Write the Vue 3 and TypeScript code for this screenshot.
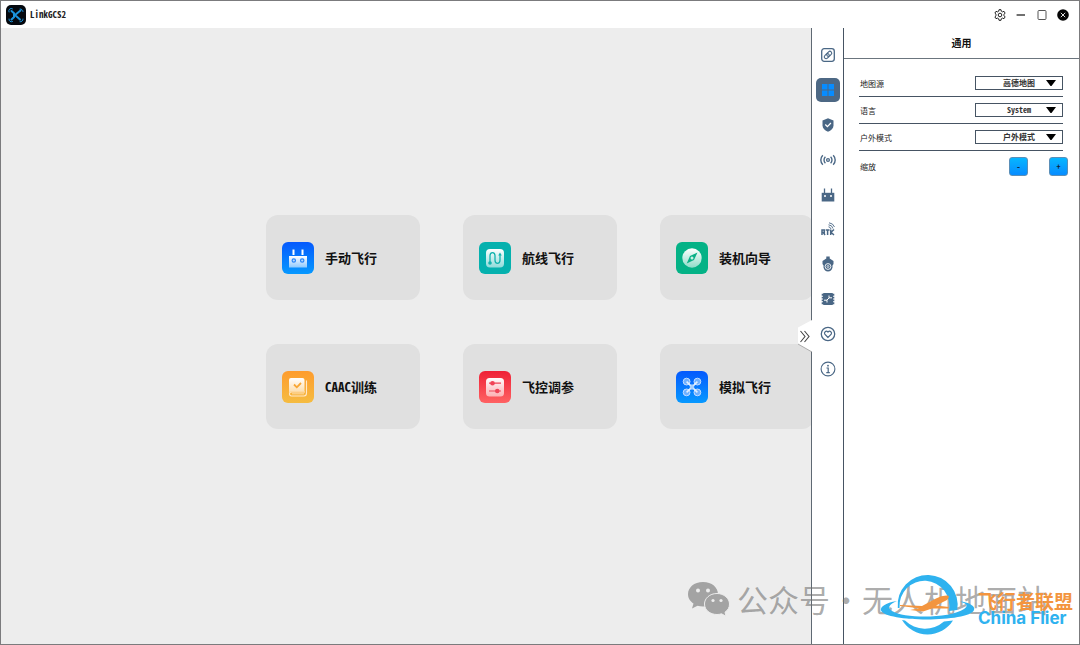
<script setup lang="ts">
import { ref } from 'vue'

interface Feature {
  id: string
  label: string
}
interface Setting {
  id: string
  label: string
  options: string[]
}

const features: Feature[] = [
  { id: 'manual', label: '手动飞行' },
  { id: 'route', label: '航线飞行' },
  { id: 'wizard', label: '装机向导' },
  { id: 'caac', label: 'CAAC训练' },
  { id: 'tuning', label: '飞控调参' },
  { id: 'sim', label: '模拟飞行' },
]

const tabs = ['link', 'general', 'safety', 'signal', 'remote', 'rtk', 'camera', 'power', 'health', 'info']
const activeTab = ref('general')

const settings: Setting[] = [
  { id: 'map-source', label: '地图源', options: ['高德地图'] },
  { id: 'language', label: '语言', options: ['System'] },
  { id: 'outdoor', label: '户外模式', options: ['户外模式'] },
]
const values = ref<Record<string, string>>({
  'map-source': '高德地图',
  language: 'System',
  outdoor: '户外模式',
})
</script>

<template>
  <div class="window">
    <header class="titlebar">
      <svg class="logo" viewBox="0 0 20 20" aria-hidden="true">
        <rect width="20" height="20" rx="5" fill="#05090f" />
        <g fill="none" stroke="#1b93dc" stroke-linecap="round">
          <path d="M5.5 6 L8 8.2 V12 L5.5 14.5 M14.500 5.500 L9 10 L14 14.500" stroke-width="2" />
          <path d="M3 7 A2.500 2.500 0 0 1 6.500 3.800 M14 4 A2.500 2.500 0 0 1 17 6.500 M17 14 A2.500 2.500 0 0 1 14 16.800 M6.500 16.600 A2.500 2.500 0 0 1 3 14" stroke-width="1" />
        </g>
      </svg>
      <h1 class="app-name">LinkGCS2</h1>
      <nav class="controls">
        <button aria-label="Settings">
          <svg viewBox="0 0 12 12" fill="none" stroke="#222" stroke-width="1">
            <path d="M4.7 2.2 L5 .7 H7 L7.3 2.2 L8.6 2.9 L10 2.3 L11.1 4.1 L10 5.2 V6.8 L11.1 7.9 L10 9.7 L8.6 9.1 L7.3 9.8 L7 11.3 H5 L4.7 9.8 L3.4 9.1 L2 9.7 L.9 7.9 L2 6.8 V5.2 L.9 4.1 L2 2.3 L3.4 2.9 Z" />
            <circle cx="6" cy="6" r="1.8" />
          </svg>
        </button>
        <button aria-label="Minimize">
          <svg viewBox="0 0 12 12"><path d="M1.500 6 H10" stroke="#111" stroke-width="1.2" /></svg>
        </button>
        <button aria-label="Maximize">
          <svg viewBox="0 0 12 12"><rect x="2" y="1.5" width="8" height="9" rx="1" fill="none" stroke="#555" /></svg>
        </button>
        <button aria-label="Close">
          <svg viewBox="0 0 12 12">
            <circle cx="6" cy="6" r="5.800" fill="#050505" />
            <path d="M3.800 3.800 L8.200 8.200 M8.200 3.800 L3.800 8.200" stroke="#ddd" stroke-width="1" />
          </svg>
        </button>
      </nav>
    </header>

    <div class="body">
      <main class="home">
        <div class="grid">
          <button v-for="f in features" :key="f.id" class="card">
            <svg class="tile" viewBox="0 0 32 32" aria-hidden="true">
              <defs>
                <linearGradient id="g-blue" x2="0" y2="1"><stop stop-color="#0559fd" /><stop offset="1" stop-color="#0799ff" /></linearGradient>
                <linearGradient id="g-orange" x2="0" y2="1"><stop stop-color="#fe9c2d" /><stop offset="1" stop-color="#f5bc41" /></linearGradient>
                <linearGradient id="g-red" x2="0" y2="1"><stop stop-color="#ef2036" /><stop offset="1" stop-color="#ff6263" /></linearGradient>
                <linearGradient id="g-fade" x2="0" y2="1"><stop stop-color="#fff" /><stop offset="1" stop-color="#fff" stop-opacity=".55" /></linearGradient>
              </defs>
              <template v-if="f.id === 'manual'">
                <rect width="32" height="32" rx="6" fill="url(#g-blue)" />
                <path d="M11.5 7.5 V13 M20.5 7.5 V13" stroke="#fff" stroke-width="2" />
                <path d="M7 14 H25 V25.5 H7 Z" fill="url(#g-fade)" />
                <g fill="#b8d9ff" stroke="#2a86f8" stroke-width="1.2"><circle cx="11.8" cy="18.5" r="1.7" /><circle cx="20.2" cy="18.5" r="1.7" /></g>
              </template>
              <template v-else-if="f.id === 'route'">
                <rect width="32" height="32" rx="6" fill="#05b1ae" />
                <rect x="7" y="7" width="18" height="18.5" rx="4" fill="url(#g-fade)" />
                <path d="M11 20 V14 C11 9.5 16 9.5 16 14 V18 C16 22.5 21 22.5 21 18 V12.5" fill="none" stroke="#13b3ae" stroke-width="1.3" />
                <circle cx="11" cy="21" r="1.8" fill="#13b3ae" /><path d="M19.200 13.5 L21 10.500 L22.800 13.5 Z" fill="#13b3ae" />
              </template>
              <template v-else-if="f.id === 'wizard'">
                <rect width="32" height="32" rx="6" fill="#04b286" />
                <circle cx="16" cy="16" r="9.7" fill="url(#g-fade)" />
                <path d="M21.5 10.5 L18 18 L10.7 21.5 L14 14 Z" fill="#08b087" /><circle cx="16" cy="16" r="1.5" fill="#c9f0e4" />
              </template>
              <template v-else-if="f.id === 'caac'">
                <rect width="32" height="32" rx="6" fill="url(#g-orange)" />
                <path d="M9 7 H20.500 Q22.500 7 22.500 9 V20.500 H9.5 Q7 20.500 7 22.500 V9 Q7 7 9 7 Z" fill="url(#g-fade)" />
                <path d="M24.500 9.500 V22 Q24.500 25 22 25 H9.500 Q7.500 25 7.500 22.800 Q7.500 21 9.500 21 H23" fill="none" stroke="#ffe9cb" stroke-width="1.1" />
                <path d="M10 22.800 H22" stroke="#ffe4bd" stroke-width=".8" />
                <path d="M12 13.5 L14.8 16.3 L19 12" fill="none" stroke="#f9a633" stroke-width="1.8" />
              </template>
              <template v-else-if="f.id === 'tuning'">
                <rect width="32" height="32" rx="6" fill="url(#g-red)" />
                <rect x="7" y="7" width="18" height="18.5" rx="3.5" fill="url(#g-fade)" />
                <path d="M10 12.2 H22 M10 20 H22" stroke="#f04457" stroke-width="1.2" />
                <g fill="#f04457"><circle cx="13.5" cy="12.2" r="2.3" /><circle cx="18.3" cy="20" r="2.3" /></g>
              </template>
              <template v-else>
                <rect width="32" height="32" rx="6" fill="url(#g-blue)" />
                <g fill="#6fb0ff" stroke="#c5deff" stroke-width="1">
                  <circle cx="10.6" cy="10.6" r="3.4" /><circle cx="21.4" cy="10.6" r="3.4" /><circle cx="10.6" cy="21.4" r="3.4" /><circle cx="21.4" cy="21.4" r="3.4" />
                </g>
                <path d="M10.6 10.6 L21.4 21.4 M21.4 10.6 L10.6 21.4" stroke="#e4f0ff" stroke-width="1.5" />
                <path d="M16 12.8 L18.5 16 L16 19.2 L13.5 16 Z" fill="#a9d2ff" />
              </template>
            </svg>
            <span>{{ f.label }}</span>
          </button>
        </div>
      </main>

      <aside class="drawer">
        <button class="handle" aria-label="Collapse">
          <svg viewBox="0 0 15 32">
            <path d="M15 0 L1 7.5 V24 L15 32 Z" fill="#fff" />
            <path d="M1 24 L15 32" stroke="#999" fill="none" stroke-width=".8" />
            <path d="M3.5 11 L8 16.500 L3.5 22 M7.500 11 L12 16.500 L7.500 22" fill="none" stroke="#444" stroke-width="1.1" />
          </svg>
        </button>

        <nav class="rail">
          <button v-for="t in tabs" :key="t" :class="{ active: t === activeTab }" :aria-label="t" @click="activeTab = t">
            <svg viewBox="0 0 16 16" fill="none" stroke="currentColor" stroke-width="1.3">
              <template v-if="t === 'link'">
                <rect x="1.7" y="1.7" width="12.6" height="12.6" rx="2.5" />
                <g transform="rotate(-45 8 8)" stroke-width="1.100"><rect x="3.500" y="6.200" width="5.600" height="3.600" rx="1.800" /><rect x="6.900" y="6.200" width="5.600" height="3.600" rx="1.800" /></g>
              </template>
              <path v-else-if="t === 'general'" d="M2 2 H7.500 V7.500 H2 Z M8.500 2 H14 V7.500 H8.500 Z M2 8.500 H7.500 V14 H2 Z M8.500 8.500 H14 V14 H8.500 Z" fill="#078cff" stroke="none" />
              <template v-else-if="t === 'safety'">
                <path d="M8 1.300 L13.500 3.400 V8.500 C13.500 11.500 11 13.500 8 14.800 C5 13.500 2.500 11.500 2.500 8.500 V3.400 Z" fill="currentColor" stroke="none" />
                <path d="M5.300 7.500 L7.400 9.600 L10.900 6" stroke="#fff" />
              </template>
              <template v-else-if="t === 'signal'">
                <circle cx="8" cy="8" r="1.4" />
                <path d="M5.400 4.800 A4.400 4.400 0 0 0 5.400 11.200 M10.600 4.800 A4.400 4.400 0 0 1 10.600 11.200 M2.800 3.200 A6.800 6.800 0 0 0 2.800 12.800 M13.200 3.200 A6.800 6.800 0 0 1 13.200 12.800" stroke-width="1.4" />
              </template>
              <template v-else-if="t === 'remote'">
                <path d="M4.500 1.500 V6 M11.500 1.500 V6" />
                <path d="M1.700 5.800 H14.300 V14.500 H1.700 Z" fill="currentColor" stroke="none" />
                <path d="M4 9 H6 M10 9 H12" stroke="#fff" stroke-width="1.6" />
              </template>
              <template v-else-if="t === 'rtk'">
                <path d="M2 14 V9 H4.300 V11.500 H2 M3.400 11.500 L5 14 M5.700 9 H9.500 M7.600 9 V14 M10.700 8.500 V14 M14 8.500 L11 11.300 L14 14" stroke-width="1.5" />
                <path d="M8.500 5.800 A3 3 0 0 1 11 8 M8.500 3.800 A5 5 0 0 1 13 7.500 M9 1.800 A6.500 6.500 0 0 1 14.500 6" stroke-width=".9" />
              </template>
              <template v-else-if="t === 'camera'">
                <path d="M6.300 .5 H9.700 V2.500 L13.500 5 V8 L12.500 9.500 V11.500 Q11.500 15.500 8 15.500 Q4.500 15.500 3.500 11.500 V9.500 L2.500 8 V5 L6.300 2.500 Z" fill="currentColor" stroke="none" />
                <circle cx="8" cy="10.500" r="2.900" stroke="#fff" stroke-width=".9" /><circle cx="8" cy="10.500" r="1" stroke="#fff" stroke-width=".7" />
              </template>
              <template v-else-if="t === 'power'">
                <rect x="3" y="2" width="10" height="12" rx="1" fill="currentColor" stroke="none" />
                <path d="M1.700 3.800 H14.300 M1.700 6.600 H14.300 M1.700 9.400 H14.300 M1.700 12.200 H14.300" stroke-width="1.9" />
                <path d="M4 9.200 H7 V11.500 M12 6.800 H9 V4.500 M6.800 9.200 L9.200 6.800" stroke="#fff" stroke-width="1" />
              </template>
              <template v-else-if="t === 'health'">
                <circle cx="8" cy="8" r="6.7" />
                <path d="M8 11.500 L4.800 8.200 C3.700 6.500 5.900 4 8 6 C10.100 4 12.300 6.500 11.200 8.200 Z" stroke-width="1.2" />
              </template>
              <template v-else>
                <circle cx="8" cy="8" r="6.9" stroke-width="1.1" />
                <path d="M6.500 7 H8.200 V11.400 M6.300 11.600 H9.800" stroke-width="1.2" /><circle cx="8" cy="4.700" r=".9" fill="currentColor" stroke="none" />
              </template>
            </svg>
          </button>
        </nav>

        <section class="panel">
          <h2>通用</h2>
          <div class="settings">
            <div v-for="s in settings" :key="s.id" class="row">
              <label :for="s.id">{{ s.label }}</label>
              <div class="select">
                <select :id="s.id" v-model="values[s.id]">
                  <option v-for="o in s.options" :key="o">{{ o }}</option>
                </select>
                <svg class="arrow" viewBox="0 0 10 6"><path d="M0 0 H10 L5.500 6 H4.500 Z" /></svg>
              </div>
            </div>
            <div class="row zoom">
              <span>缩放</span>
              <div class="steps">
                <button aria-label="缩小">-</button>
                <button aria-label="放大">+</button>
              </div>
            </div>
          </div>
        </section>
      </aside>
    </div>

    <div class="watermark">
      <svg viewBox="0 0 44 36" aria-hidden="true">
        <path d="M16 1 C7 1 1 6.500 1 13.300 C1 17.500 3.500 20.500 6.500 22.500 L5 27.500 L10.500 24.800 Q13 25.600 16 25.600 C24 25.600 31 20 31 13.300 C31 6.500 25 1 16 1 Z" fill="#a3a3a3" />
        <path d="M30 12.500 C22.500 12.500 17.500 17.500 17.500 23 C17.500 29 23 33.500 30 33.500 Q32.500 33.500 34.500 32.800 L39 35.200 L38 31.200 C41 29 42.500 26.500 42.500 23 C42.500 17.500 37 12.500 30 12.500 Z" fill="#a3a3a3" stroke="#ededed" />
        <g fill="#ededed"><circle cx="11" cy="9.500" r="2" /><circle cx="21" cy="9.500" r="2" /><circle cx="26" cy="19.500" r="1.600" /><circle cx="34" cy="19.500" r="1.600" /></g>
      </svg>
      <span>公众号</span><span class="dot">·</span><span>无人机地面站</span>
    </div>

    <div class="brand">
      <svg viewBox="0 0 96 64" aria-hidden="true">
        <path d="M17.800 35 A30 30 0 1 1 77.200 37 L69 38 A25 25.500 0 1 0 19.500 35 Z" fill="#2fb2ef" />
        <path d="M22 47 A30 30 0 0 0 73 47.500 L64 48.500 A30 32 0 0 1 25 47.500 Z" fill="#2fb2ef" />
        <path d="M17 28 C5 30 0 34 1 37.500 C6 49.500 89 49.500 94 37 C96 33 88 29 80 28.500 C88 31 88 33 84 36 C70 45.500 25 46 12 38 C7 35 9 31 17 28 Z" fill="#2fb2ef" />
        <path d="M20 32 L42 33 L56 25.500 Q62 22 68 22.500 Q70 24 67 27 L56 32.500 L69 34 L68 35.500 L52 35.500 L43 38.500 L30 37 L39 35.300 L20 33 Z" fill="#f3953f" />
      </svg>
      <div class="brand-text">
        <strong class="cn">飞行者联盟</strong>
        <strong class="en">China Flier</strong>
      </div>
    </div>
  </div>
</template>

<style>
body {
  margin: 0;
}
</style>

<style scoped>
* {
  box-sizing: border-box;
}
.window {
  position: relative;
  display: flex;
  flex-direction: column;
  min-height: 100vh;
  overflow: hidden;
  border: 1px solid #7b7b7d;
  background: #fff;
  color: #111;
  font-family: "Noto Sans Mono CJK SC", "Noto Sans CJK SC", sans-serif;
  font-feature-settings: "hwid";
}
button {
  padding: 0;
  border: 0;
  background: none;
  color: inherit;
  font: inherit;
  font-feature-settings: inherit;
}
svg {
  display: block;
}
h1,
h2 {
  margin: 0;
}
.titlebar {
  display: flex;
  align-items: center;
  height: 27px;
  padding: 0 10px 0 5px;
}
.logo {
  width: 20px;
  height: 20px;
}
.app-name {
  margin-left: 4px;
  color: #222;
  font-size: 9px;
  font-weight: 700;
}
.controls {
  display: flex;
  gap: 9px;
  margin-left: auto;
}
.controls svg {
  width: 12px;
  height: 12px;
}
.body {
  position: relative;
  display: flex;
  flex: 1;
}
.home {
  display: flex;
  flex: 1;
  align-items: center;
  justify-content: center;
  padding-bottom: 28px;
  background: #ededed;
}
.grid {
  display: grid;
  grid-template-columns: repeat(3, 154px);
  gap: 44px 43px;
}
.card {
  display: flex;
  align-items: center;
  gap: 11px;
  height: 85px;
  padding: 0 16px;
  border-radius: 12px;
  background: #e0e0e0;
  font-size: 13px;
  font-weight: 700;
}
.tile {
  width: 32px;
  height: 32px;
}
.drawer {
  position: absolute;
  inset: 0 0 0 auto;
  display: flex;
  width: 268px;
  border-left: 1px solid #5f6973;
  background: #fff;
}
.handle {
  position: absolute;
  top: 292px;
  right: 100%;
}
.handle svg {
  width: 15px;
  height: 32px;
}
.rail {
  display: flex;
  flex-direction: column;
  align-items: center;
  justify-content: space-between;
  width: 31px;
  height: 338px;
  margin-top: 15px;
  color: #4a6785;
}
.rail button {
  display: grid;
  place-items: center;
  width: 24px;
  height: 24px;
  border-radius: 5px;
}
.rail .active {
  background: #4d6884;
}
.rail svg {
  width: 16px;
  height: 16px;
}
.panel {
  flex: 1;
  border-left: 1px solid #465463;
}
.panel h2 {
  height: 31px;
  border-bottom: 1px solid #6b757e;
  font-size: 10px;
  font-weight: 700;
  line-height: 30px;
  text-align: center;
}
.settings {
  padding: 11px 16px 0 15px;
  color: #222;
  font-size: 8px;
}
.row {
  display: flex;
  align-items: center;
  justify-content: space-between;
  height: 27px;
  padding-left: 1px;
  border-bottom: 1px solid #465463;
}
.select {
  position: relative;
  width: 88px;
}
.select select {
  display: block;
  width: 100%;
  height: 14px;
  padding: 0;
  border: 1px solid #465463;
  border-radius: 0;
  appearance: none;
  background: #fff;
  color: #333;
  font: inherit;
  font-feature-settings: inherit;
  font-weight: 700;
  line-height: 12px;
  text-align: center;
  text-align-last: center;
}
.arrow {
  position: absolute;
  top: 4px;
  right: 7px;
  width: 10px;
  height: 6px;
  pointer-events: none;
}
.zoom {
  height: 31px;
  margin-right: -5px;
  border: 0;
}
.steps {
  display: flex;
  gap: 21px;
}
.steps button {
  width: 19px;
  height: 19px;
  border: 1px solid #5a8fb8;
  border-radius: 3px;
  background: linear-gradient(#06b6ff, #078cff);
  color: #123;
  font-weight: 700;
  line-height: 17px;
}
.watermark {
  position: absolute;
  right: 31px;
  bottom: 23px;
  display: flex;
  align-items: center;
  color: rgba(110, 110, 110, 0.58);
  font-size: 31px;
  font-weight: 300;
  line-height: 44px;
  pointer-events: none;
}
.watermark svg {
  width: 44px;
  height: 36px;
  margin-right: 6px;
}
.dot {
  width: 32px;
  text-align: center;
}
.brand {
  position: absolute;
  right: 6px;
  bottom: 7px;
  display: flex;
  align-items: center;
  gap: 2px;
  pointer-events: none;
}
.brand svg {
  width: 96px;
  height: 64px;
}
.brand-text {
  display: flex;
  flex-direction: column;
  width: 95px;
  padding-top: 8px;
}
.cn {
  color: #f3953f;
  font-size: 19px;
  line-height: 19px;
}
.en {
  color: #2fb2ef;
  font-family: Inter, sans-serif;
  font-feature-settings: normal;
  font-size: 17px;
  line-height: 17px;
  white-space: nowrap;
}
</style>
